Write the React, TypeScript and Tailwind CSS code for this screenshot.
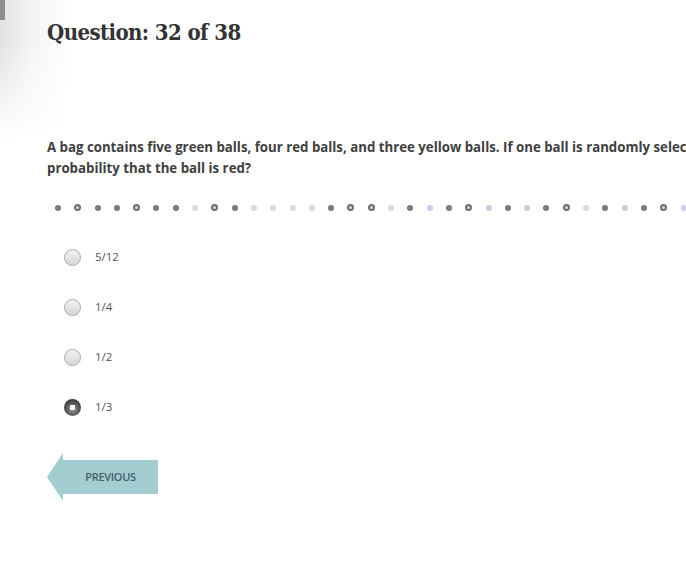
import React from "react";

const dots: string[] = [
  "d", "r", "d", "d", "r", "d", "d", "l", "r", "d", "l", "l", "l", "l", "d", "r", "r",
  "l", "d", "b", "d", "r", "b", "d", "b", "d", "r", "l", "d", "b", "d", "r", "b",
  "d", "l", "d", "r", "d",
];

const Dot = ({ kind }: { kind: string }) => {
  if (kind === "r") {
    return (
      <span className="flex h-[7px] w-[7px] items-center justify-center rounded-full bg-[#6f6f6f]">
        <span className="h-[3px] w-[3px] rounded-full bg-[#d8d8d8]" />
      </span>
    );
  }
  if (kind === "l") return <span className="h-[6px] w-[6px] rounded-full bg-[#dadada]" />;
  if (kind === "b") return <span className="h-[6px] w-[6px] rounded-full bg-[#c9cfe6]" />;
  return <span className="h-[6px] w-[6px] rounded-full bg-[#7a7a7a]" />;
};

const Radio = ({ checked }: { checked?: boolean }) =>
  checked ? (
    <span className="flex h-[17px] w-[17px] items-center justify-center rounded-full bg-[radial-gradient(circle_at_50%_60%,#9a9a9a_0%,#3c3c3c_70%,#2a2a2a_100%)]">
      <span className="h-[5px] w-[5px] rounded-[1px] bg-white" />
    </span>
  ) : (
    <span className="h-[17px] w-[17px] rounded-full border border-[#a9a9a9] bg-[linear-gradient(#f2f2f2,#d6d6d6)]" />
  );

const options = [
  { label: "5/12" },
  { label: "1/4" },
  { label: "1/2" },
  { label: "1/3", checked: true },
];

export default function App() {
  return (
    <div className="relative h-[578px] w-[686px] overflow-hidden bg-white">
      <div className="absolute left-0 top-0 h-[140px] w-[70px] bg-[linear-gradient(90deg,#e2e2e2,#f4f4f4_45%,#ffffff)] [mask-image:linear-gradient(#000_30%,transparent)]" />
      <div className="absolute left-0 top-0 h-[20px] w-[5px] bg-[#8d8d8d]" />

      <div className="relative w-[900px] pl-[47px] pt-[17px]">
        <h1 className="font-['DejaVu_Serif_Condensed','DejaVu_Serif',serif] text-[22px] font-bold leading-[30px] tracking-[-0.6px] text-[#333333] [font-stretch:condensed]">
          Question: 32 of 38
        </h1>

        <p className="mt-[90px] w-[780px] font-['Open_Sans',sans-serif] text-[13.25px] font-bold leading-[21px] text-[#404040]">
          A bag contains five green balls, four red balls, and three yellow balls. If one ball is randomly selected, what is the probability that the ball is red?
        </p>

        <div className="mt-[25px] flex items-center gap-[13.3px] pl-[8px]">
          {dots.map((k, i) => (
            <Dot key={i} kind={k} />
          ))}
        </div>

        <div className="mt-[37px] flex flex-col gap-[32px] pl-[17px]">
          {options.map((o) => (
            <label key={o.label} className="flex h-[18px] items-center gap-[14px]">
              <Radio checked={o.checked} />
              <span className="font-['Open_Sans',sans-serif] text-[11.5px] text-[#555555]">{o.label}</span>
            </label>
          ))}
        </div>

        <button className="mt-[37px] flex h-[48px] items-center">
          <svg width="16" height="48" viewBox="0 0 16 48" className="block">
            <polygon points="16,0 0,24 16,48" fill="#a3cdd0" />
          </svg>
          <span className="flex h-[34px] w-[95px] items-center justify-center bg-[#a3cdd0] font-['Open_Sans',sans-serif] text-[11px] font-semibold tracking-[-0.3px] text-[#445f69]">
            PREVIOUS
          </span>
        </button>
      </div>
    </div>
  );
}
